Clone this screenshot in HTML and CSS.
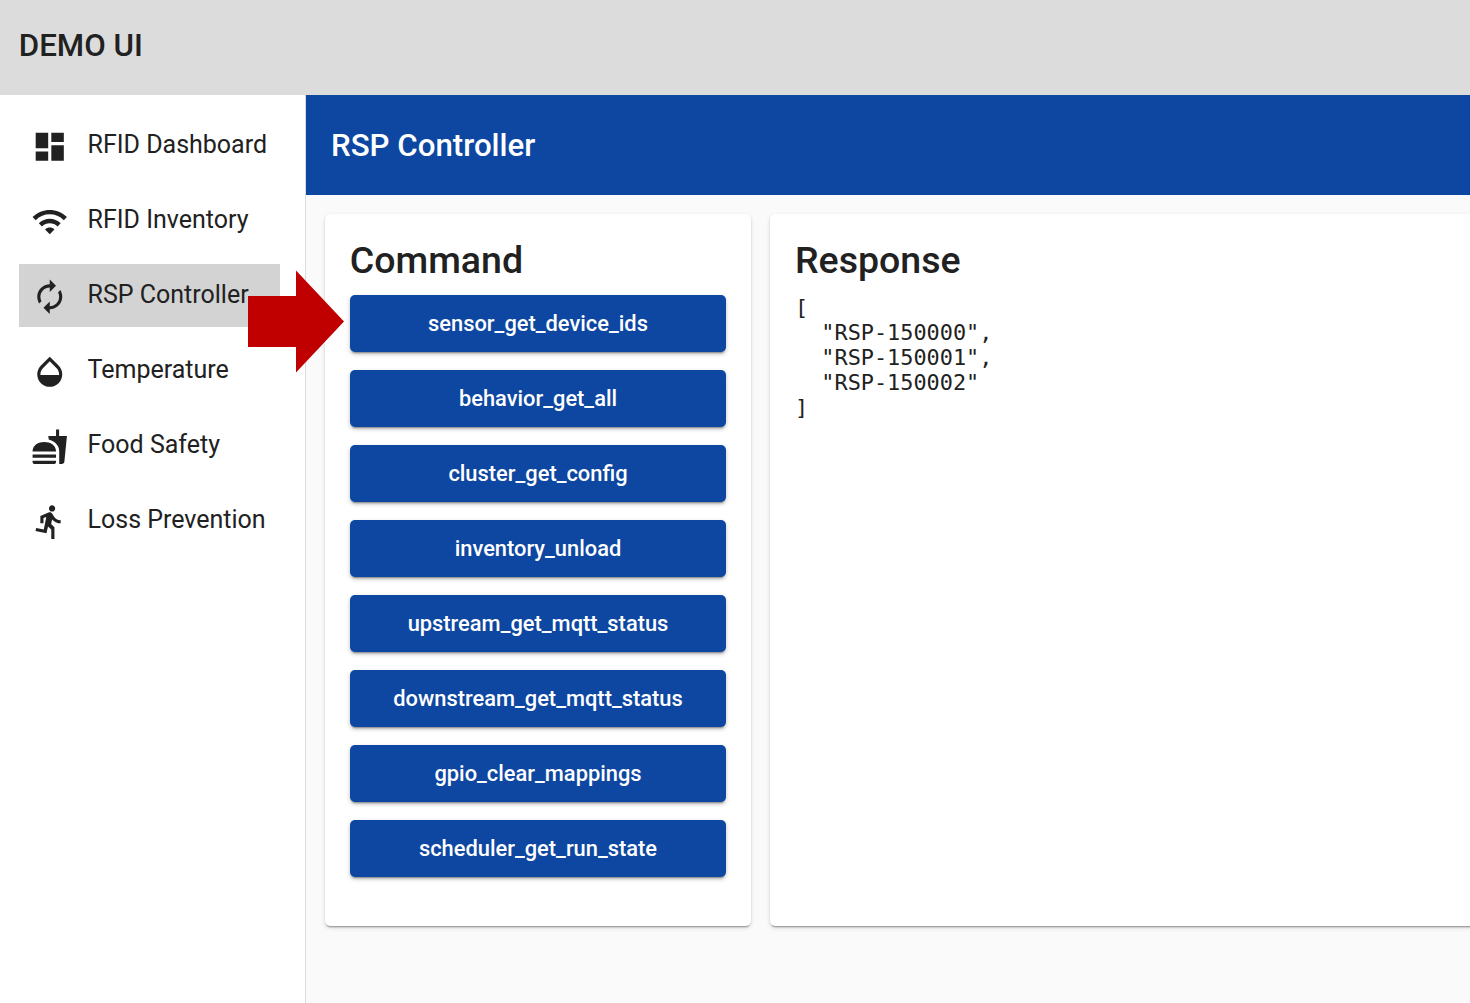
FILE: index.html
```html
<!DOCTYPE html>
<html lang="en">
<head>
<meta charset="utf-8">
<title>Demo UI</title>
<link rel="stylesheet" href="styles.css">
</head>
<body>
<header class="topbar">DEMO UI</header>
<div class="shell">
  <nav class="sidebar">
    <a class="nav-item"><svg class="icon" viewBox="0 0 24 24"><path d="M3 13h8V3H3v10zm0 8h8v-6H3v6zm10 0h8V11h-8v10zm0-18v6h8V3h-8z"/></svg><span>RFID Dashboard</span></a>
    <a class="nav-item"><svg class="icon" viewBox="0 0 24 24"><path d="M1 9l2 2c4.97-4.97 13.03-4.97 18 0l2-2C16.93 2.93 7.08 2.93 1 9zm8 8l3 3 3-3c-1.65-1.66-4.34-1.66-6 0zm-4-4l2 2c2.76-2.76 7.24-2.76 10 0l2-2C15.14 9.14 8.87 9.14 5 13z"/></svg><span>RFID Inventory</span></a>
    <a class="nav-item active"><svg class="icon" viewBox="0 0 24 24"><path d="M12 6v3l4-4-4-4v3c-4.42 0-8 3.58-8 8 0 1.57.46 3.03 1.24 4.26L6.7 14.8c-.45-.83-.7-1.79-.7-2.8 0-3.31 2.69-6 6-6zm6.76 1.74L17.3 9.2c.44.84.7 1.79.7 2.8 0 3.31-2.69 6-6 6v-3l-4 4 4 4v-3c4.42 0 8-3.58 8-8 0-1.57-.46-3.03-1.24-4.26z"/></svg><span>RSP Controller</span></a>
    <a class="nav-item"><svg class="icon" viewBox="0 0 24 24"><path d="M17.66 8L12 2.35 6.34 8C4.78 9.56 4 11.64 4 13.64s.78 4.11 2.34 5.67 3.61 2.35 5.66 2.35 4.1-.79 5.66-2.35S20 15.64 20 13.64 19.22 9.56 17.66 8zM6 14c.01-2 .62-3.27 1.76-4.4L12 5.27l4.24 4.38C17.38 10.77 17.99 12 18 14H6z"/></svg><span>Temperature</span></a>
    <a class="nav-item"><svg class="icon" viewBox="0 0 24 24"><path d="M18.06 22.99h1.66c.84 0 1.53-.64 1.63-1.46L23 5.05h-5V1h-1.97v4.05h-4.97l.3 2.34c1.71.47 3.31 1.32 4.27 2.26 1.44 1.42 2.43 2.89 2.43 5.29v8.05zM1 21.99V21h15.03v.99c0 .55-.45 1-1.01 1H2.01c-.56 0-1.01-.45-1.01-1zm15.03-7c0-8-15.03-8-15.03 0h15.03zM1.02 17h15v2h-15z"/></svg><span>Food Safety</span></a>
    <a class="nav-item"><svg class="icon" viewBox="0 0 24 24"><path d="M13.49 5.48c1.1 0 2-.9 2-2s-.9-2-2-2-2 .9-2 2 .9 2 2 2zm-3.6 13.9l1-4.4 2.1 2v6h2v-7.5l-2.1-2 .6-3c1.3 1.5 3.3 2.5 5.5 2.5v-2c-1.9 0-3.5-1-4.3-2.4l-1-1.6c-.4-.6-1-1-1.7-1-.3 0-.5.1-.8.1l-5.2 2.2v4.7h2v-3.4l1.8-.7-1.6 8.1-4.9-1-.4 2 7 1.4z"/></svg><span>Loss Prevention</span></a>
  </nav>
  <main class="content">
    <h1 class="page-title">RSP Controller</h1>
    <div class="cards">
      <section class="card command">
        <h2 class="card-title">Command</h2>
        <div class="buttons">
          <button class="btn">sensor_get_device_ids</button>
          <button class="btn">behavior_get_all</button>
          <button class="btn">cluster_get_config</button>
          <button class="btn">inventory_unload</button>
          <button class="btn">upstream_get_mqtt_status</button>
          <button class="btn">downstream_get_mqtt_status</button>
          <button class="btn">gpio_clear_mappings</button>
          <button class="btn">scheduler_get_run_state</button>
        </div>
      </section>
      <section class="card response">
        <h2 class="card-title">Response</h2>
        <pre class="output">[
  "RSP-150000",
  "RSP-150001",
  "RSP-150002"
]</pre>
      </section>
    </div>
  </main>
</div>
<svg class="pointer" viewBox="0 0 96 102"><path d="M0 25.5H48V0L96 51L48 102V76.5H0z"/></svg>
</body>
</html>
```
FILE: styles.css
```css
* { box-sizing: border-box; }
body {
  margin: 0;
  height: 1003px;
  overflow: hidden;
  display: flex;
  flex-direction: column;
  font-family: Roboto, sans-serif;
  color: #212121;
  background: #fafafa;
}
.topbar {
  flex: 0 0 95.3px;
  padding: 0 18.75px 4.5px;
  display: flex;
  align-items: center;
  background: #dcdcdc;
  font-size: 31.25px;
  font-weight: 500;
}
.shell { flex: 1; display: flex; min-height: 0; }
.sidebar {
  flex: 0 0 306px;
  padding: 18.75px 25.25px 0 18.75px;
  display: flex;
  flex-direction: column;
  gap: 12.5px;
  background: #fff;
  border-right: 1px solid #dcdcdc;
}
.nav-item {
  height: 62.5px;
  padding-left: 12.5px;
  display: flex;
  align-items: center;
  gap: 18.75px;
  font-size: 25px;
  white-space: nowrap;
}
.nav-item span { padding-bottom: 1.5px; }
.nav-item.active { background: #d3d3d3; }
.icon { width: 37.5px; height: 37.5px; flex: none; margin-top: 2px; fill: #212121; }
.content { flex: 1; min-width: 0; display: flex; flex-direction: column; }
.page-title {
  margin: 0;
  height: 100px;
  padding-left: 25px;
  line-height: 101px;
  background: #0d47a1;
  color: #fff;
  font-size: 31.25px;
  font-weight: 500;
}
.cards { display: flex; gap: 18.75px; padding: 18.75px 0 0 18.75px; }
.card {
  height: 712px;
  padding: 24px 25px 25px;
  background: #fff;
  border-radius: 5px;
  box-shadow: 0 3px 2px -2px rgba(0,0,0,.3), 0 1px 2px rgba(0,0,0,.14), 0 2px 5px rgba(0,0,0,.1);
}
.command { flex: 0 0 426.5px; }
.response { flex: 0 0 740px; }
.card-title { margin: 0; font-size: 37.5px; line-height: 44px; font-weight: 500; }
.buttons { display: flex; flex-direction: column; gap: 18.75px; margin-top: 13.4px; }
.btn {
  height: 56.25px;
  padding: 0;
  border: 0;
  border-radius: 5px;
  background: #0d47a1;
  color: #fff;
  font: 500 21.875px Roboto, sans-serif;
  box-shadow: 0 3px 2px -2px rgba(0,0,0,.35), 0 2px 4px rgba(0,0,0,.25);
}
.output { margin: 13px 0 0; font: 21.875px/25px "DejaVu Sans Mono", monospace; }
.pointer { position: absolute; left: 248px; top: 270px; width: 96px; height: 103px; fill: #c00000; }
```
